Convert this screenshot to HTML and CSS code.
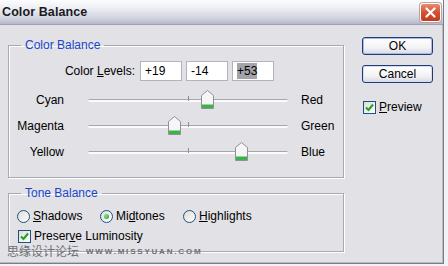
FILE: index.html
```html
<!DOCTYPE html>
<html>
  <head>
    <link rel="stylesheet" href="styles.css">
  </head>
  <body>
    <div class="window">
      <div class="titlebar">
        <span class="title">Color Balance</span>
        <span class="close">
          <svg width="11" height="11" viewBox="0 0 11 11">
            <path d="M1.5 1.5 L9.5 9.5 M9.5 1.5 L1.5 9.5" stroke="#fff" stroke-width="2.2" stroke-linecap="round"/>
          </svg>
        </span>
      </div>
      <div class="client">
        <div class="main">
          <fieldset class="group balance">
            <legend>Color Balance</legend>
            <div class="levels">
              <span class="levels-label">Color <u>L</u>evels:</span>
              <span class="field">+19</span>
              <span class="field">-14</span>
              <span class="field"><span class="selected">+53</span></span>
            </div>
            <div class="sliders">
              <div class="slider-row">
                <span class="from">Cyan</span>
                <div class="track">
                  <span class="tick"></span>
                  <svg class="thumb" style="left: 113px" width="13" height="19" viewBox="0 0 13 19">
                    <path d="M6.5 0.5 L12.5 5.5 L12.5 18.5 L0.5 18.5 L0.5 5.5 Z" fill="#f6f6f6" stroke="#8e9199"/>
                    <rect x="1" y="14.5" width="11" height="3.5" fill="#3cb34a"/>
                  </svg>
                </div>
                <span class="to">Red</span>
              </div>
              <div class="slider-row">
                <span class="from">Magenta</span>
                <div class="track">
                  <span class="tick"></span>
                  <svg class="thumb" style="left: 80px" width="13" height="19" viewBox="0 0 13 19">
                    <path d="M6.5 0.5 L12.5 5.5 L12.5 18.5 L0.5 18.5 L0.5 5.5 Z" fill="#f6f6f6" stroke="#8e9199"/>
                    <rect x="1" y="14.5" width="11" height="3.5" fill="#3cb34a"/>
                  </svg>
                </div>
                <span class="to">Green</span>
              </div>
              <div class="slider-row">
                <span class="from">Yellow</span>
                <div class="track">
                  <span class="tick"></span>
                  <svg class="thumb" style="left: 147px" width="13" height="19" viewBox="0 0 13 19">
                    <path d="M6.5 0.5 L12.5 5.5 L12.5 18.5 L0.5 18.5 L0.5 5.5 Z" fill="#f6f6f6" stroke="#8e9199"/>
                    <rect x="1" y="14.5" width="11" height="3.5" fill="#3cb34a"/>
                  </svg>
                </div>
                <span class="to">Blue</span>
              </div>
            </div>
          </fieldset>

          <fieldset class="group tone">
            <legend>Tone Balance</legend>
            <div class="radios">
              <label class="radio"><span class="dot"></span><span><u>S</u>hadows</span></label>
              <label class="radio"><span class="dot on"></span><span>Mi<u>d</u>tones</span></label>
              <label class="radio"><span class="dot"></span><span><u>H</u>ighlights</span></label>
            </div>
            <label class="check luminosity">
              <span class="box">
                <svg width="9" height="9" viewBox="0 0 9 9"><path d="M1 4.5 L3.5 7 L8 1.5" fill="none" stroke="#21a121" stroke-width="2"/></svg>
              </span>
              <span>Preser<u>v</u>e Luminosity</span>
            </label>
          </fieldset>
        </div>

        <div class="side">
          <button class="btn default">OK</button>
          <button class="btn">Cancel</button>
          <label class="check">
            <span class="box">
              <svg width="9" height="9" viewBox="0 0 9 9"><path d="M1 4.5 L3.5 7 L8 1.5" fill="none" stroke="#21a121" stroke-width="2"/></svg>
            </span>
            <span><u>P</u>review</span>
          </label>
        </div>
      </div>
      <div class="watermark"><span class="cn">思缘设计论坛</span><span class="url">WWW.MISSYUAN.COM</span></div>
    </div>
  </body>
</html>
```

FILE: styles.css
```css
body {
  margin: 0;
  background-color: #f2f2f4;
  font-family: "Liberation Sans", Arial, sans-serif;
  font-size: 12px;
  color: #000;
}
.window {
  position: relative;
  width: 443px;
  height: 263px;
  background-color: #e1e1e6;
  border-right: 1px solid #7b7c88;
  border-bottom: 1px solid #7b7c88;
  box-shadow: inset -1px -1px 0 #b9bac6;
}
.titlebar {
  height: 24px;
  display: flex;
  align-items: center;
  justify-content: space-between;
  padding: 0 1px 0 2px;
  border-bottom: 1px solid #9d9fb2;
  background: linear-gradient(#fdfdfe, #eceef3 35%, #d2d4e0 75%, #b6b8ca);
}
.title {
  font-size: 12.5px;
  font-weight: bold;
  color: #1a1a22;
  letter-spacing: 0.1px;
}
.close {
  width: 19px;
  height: 17px;
  margin-right: 1px;
  display: flex;
  align-items: center;
  justify-content: center;
  border: 1px solid #fff;
  border-radius: 3px;
  background: linear-gradient(#e88d72, #d4512f 50%, #c33c1d);
  box-shadow: 0 0 0 1px #b9a2a0;
}
.client {
  display: flex;
  gap: 18px;
  padding-left: 8px;
}
.main {
  width: 336px;
}
.group {
  margin: 0;
  padding: 0;
  min-inline-size: 0;
  border: 1px solid #a7a8b1;
  box-shadow: inset 1px 1px 0 #fff, 1px 1px 0 #fff;
}
.group legend {
  margin-left: 12px;
  padding: 0 4px;
  line-height: 14px;
  color: #1846c8;
}
.balance {
  margin-top: 13px;
  height: 140px;
  box-sizing: border-box;
}
.levels {
  display: flex;
  align-items: center;
  gap: 4px;
  margin-top: 9px;
}
.levels-label {
  width: 126px;
  margin-right: 1px;
  text-align: right;
}
.field {
  width: 42px;
  height: 20px;
  box-sizing: border-box;
  display: flex;
  align-items: center;
  padding-left: 4px;
  background-color: #fff;
  border: 1px solid #b2b4bc;
}
.selected {
  background-color: #a3a3aa;
  padding: 1px 0;
  line-height: 14px;
}
.sliders {
  margin-top: 6px;
}
.slider-row {
  display: flex;
  align-items: center;
  height: 26px;
}
.from {
  width: 55px;
  text-align: right;
}
.to {
  margin-left: 13px;
}
.track {
  position: relative;
  width: 200px;
  height: 2px;
  margin-left: 24px;
  margin-top: 1px;
  background-color: #fbfbfb;
  border-top: 1px solid #a6a6ad;
  border-radius: 2px;
}
.tick {
  position: absolute;
  left: 100px;
  top: -4px;
  width: 1px;
  height: 5px;
  background-color: #8d8d94;
}
.thumb {
  position: absolute;
  top: -10px;
}
.tone {
  margin-top: 8px;
  height: 66px;
  box-sizing: border-box;
}
.radios {
  display: flex;
  padding-left: 8px;
  margin-top: 9px;
}
.radio {
  width: 83px;
  display: flex;
  align-items: center;
  gap: 3px;
  white-space: nowrap;
}
.dot {
  width: 11px;
  height: 11px;
  border: 1px solid #1c5180;
  border-radius: 50%;
  display: flex;
  align-items: center;
  justify-content: center;
  background: linear-gradient(135deg, #dcdcd7, #fff);
}
.dot.on::after {
  content: "";
  width: 5px;
  height: 5px;
  border-radius: 50%;
  background: radial-gradient(circle at 35% 35%, #8ee08e, #1e9c1e);
}
.check {
  display: flex;
  align-items: center;
  gap: 3px;
  white-space: nowrap;
}
.box {
  width: 11px;
  height: 11px;
  border: 1px solid #1c5180;
  display: flex;
  align-items: center;
  justify-content: center;
  background: linear-gradient(135deg, #dcdcd7, #fff);
}
.luminosity {
  padding-left: 9px;
  margin-top: 6px;
}
.side {
  display: flex;
  flex-direction: column;
  align-items: flex-start;
  padding-top: 12px;
}
.btn {
  width: 71px;
  height: 18px;
  padding: 0;
  margin-bottom: 10px;
  font-family: inherit;
  font-size: 12px;
  color: #000;
  border: 1px solid #1f3c78;
  border-radius: 3px;
  background: linear-gradient(#ffffff, #f3f3f6 60%, #d9dae3);
  box-shadow: inset 0 0 0 1px #d7ddf0;
}
.btn.default {
  box-shadow: inset 0 0 0 1px #a8bbe6;
}
.side .check {
  margin-top: 7px;
  margin-left: 1px;
}
.watermark {
  position: absolute;
  left: 7px;
  top: 245px;
  display: flex;
  align-items: center;
  gap: 7px;
  color: #6f6f76;
}
.cn {
  font-family: "Noto Sans CJK SC", sans-serif;
  font-size: 12px;
  line-height: 12px;
}
.url {
  font-size: 8px;
  font-weight: bold;
  letter-spacing: 1.8px;
  margin-top: 1px;
}
```
